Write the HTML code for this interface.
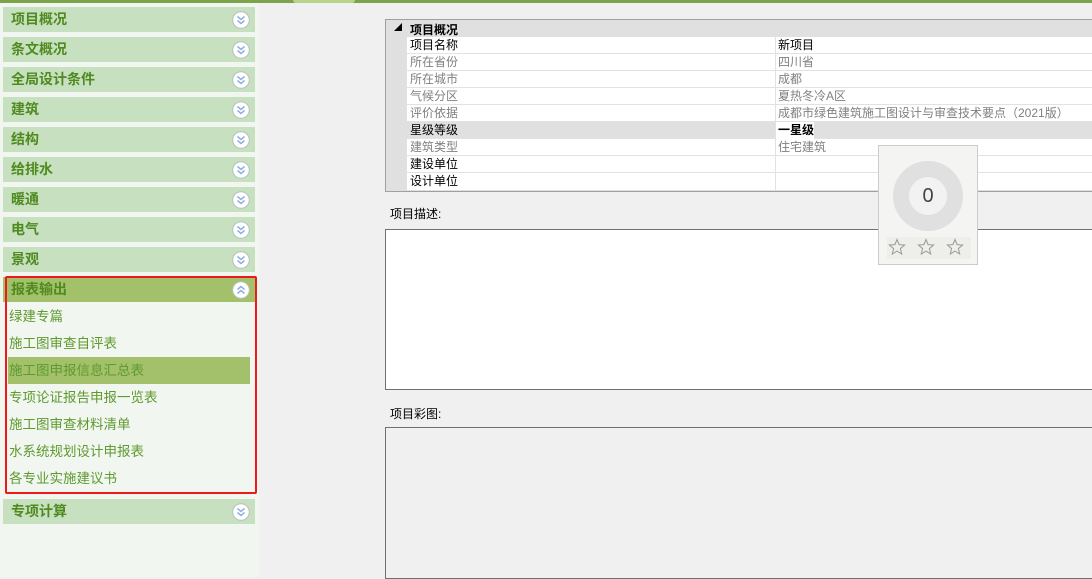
<!DOCTYPE html>
<html><head><meta charset="utf-8"><style>
*{margin:0;padding:0;box-sizing:border-box}
body{width:1092px;height:577px;overflow:hidden;background:#f0f0f0;font-family:"Liberation Sans","Noto Sans CJK SC",sans-serif;position:relative}
.top{position:absolute;left:0;top:0;width:1092px;height:3px;background:#7aa34a}
.tab{position:absolute;left:293px;top:0;width:62px;height:3px;background:#b8d48a;border-radius:0 0 4px 4px}
.side{position:absolute;left:0;top:3px;width:259px;height:574px;background:#f1f6f0}
.h{position:absolute;left:3px;width:252px;height:25px;background:#c6e0c0;color:#4f8a1e;font-weight:bold;font-size:14px;line-height:25px;padding-left:8px}
.h svg{position:absolute;right:5px;top:4px}
.it{position:absolute;left:9px;font-size:13.5px;color:#5f9a30;line-height:20px}
.red{position:absolute;left:5px;top:276px;width:252px;height:218px;border:2px solid #f01818;border-radius:2px}
.grid{position:absolute;left:385px;top:19px;width:710px;height:173px;border:1px solid #a0a0a0;background:#e0e0e0;font-size:12px}
.r{position:absolute;left:21px;width:690px;height:17px;border-bottom:1px solid #e2e2e2;background:#fff;line-height:16px}
.r span{position:absolute;left:3px}
.r b,.r em{position:absolute;left:368px;font-style:normal;padding-left:2px;border-left:1px solid #e2e2e2;height:17px;top:0}
.g{color:#808080}
.box{position:absolute;left:385px;border:1px solid #707070}
.lbl{position:absolute;left:390px;font-size:12px;color:#000}
</style></head><body>
<svg width="0" height="0" style="position:absolute"><defs>
<g id="dn"><circle cx="9" cy="9" r="8.3" fill="#fff" stroke="#b8c0c0"/><path d="M5.5 5.5L9 8.5L12.5 5.5M5.5 9.5L9 12.5L12.5 9.5" fill="none" stroke="#8fb0e0" stroke-width="1.5"/></g>
<g id="up"><circle cx="9" cy="9" r="8.3" fill="#fff" stroke="#b8c0c0"/><path d="M5.5 8.5L9 5.5L12.5 8.5M5.5 12.5L9 9.5L12.5 12.5" fill="none" stroke="#8fb0e0" stroke-width="1.5"/></g>
<path id="st" d="M9 1.5L11.1 6.6L16.6 7L12.4 10.6L13.7 16L9 13.1L4.3 16L5.6 10.6L1.4 7L6.9 6.6Z" fill="none" stroke="#999" stroke-width="1"/>
</defs></svg>
<div class="top"></div><div class="tab"></div>
<div class="side">
<div class="h" style="top:4px">项目概况<svg width="18" height="18"><use href="#dn"/></svg></div>
<div class="h" style="top:34px">条文概况<svg width="18" height="18"><use href="#dn"/></svg></div>
<div class="h" style="top:64px">全局设计条件<svg width="18" height="18"><use href="#dn"/></svg></div>
<div class="h" style="top:94px">建筑<svg width="18" height="18"><use href="#dn"/></svg></div>
<div class="h" style="top:124px">结构<svg width="18" height="18"><use href="#dn"/></svg></div>
<div class="h" style="top:154px">给排水<svg width="18" height="18"><use href="#dn"/></svg></div>
<div class="h" style="top:184px">暖通<svg width="18" height="18"><use href="#dn"/></svg></div>
<div class="h" style="top:214px">电气<svg width="18" height="18"><use href="#dn"/></svg></div>
<div class="h" style="top:244px">景观<svg width="18" height="18"><use href="#dn"/></svg></div>
<div class="h" style="top:274px;background:#a3c06a">报表输出<svg width="18" height="18"><use href="#up"/></svg></div>
<div style="position:absolute;left:8px;top:354px;width:242px;height:27px;background:#a3c06a"></div>
<div class="it" style="top:304px">绿建专篇</div>
<div class="it" style="top:331px">施工图审查自评表</div>
<div class="it" style="top:358px">施工图申报信息汇总表</div>
<div class="it" style="top:385px">专项论证报告申报一览表</div>
<div class="it" style="top:412px">施工图审查材料清单</div>
<div class="it" style="top:439px">水系统规划设计申报表</div>
<div class="it" style="top:466px">各专业实施建议书</div>
<div class="h" style="top:496px">专项计算<svg width="18" height="18"><use href="#dn"/></svg></div>
</div>
<div class="red"></div>
<div class="grid">
<div style="position:absolute;left:8px;top:2px;font-size:8px">◢</div>
<div style="position:absolute;left:24px;top:1px;font-weight:bold">项目概况</div>
<div class="r" style="top:17px"><span>项目名称</span><b style="font-weight:normal">新项目</b></div>
<div class="r g" style="top:34px"><span>所在省份</span><em>四川省</em></div>
<div class="r g" style="top:51px"><span>所在城市</span><em>成都</em></div>
<div class="r g" style="top:68px"><span>气候分区</span><em>夏热冬冷A区</em></div>
<div class="r g" style="top:85px"><span>评价依据</span><em>成都市绿色建筑施工图设计与审查技术要点（2021版）</em></div>
<div class="r" style="top:102px;background:#e0e0e0"><span>星级等级</span><b style="background:#fff">一星级</b></div>
<div class="r g" style="top:119px"><span>建筑类型</span><em>住宅建筑</em></div>
<div class="r" style="top:136px"><span>建设单位</span><em></em></div>
<div class="r" style="top:153px;border-bottom:0"><span>设计单位</span><em></em></div>
</div>
<div class="lbl" style="top:205px">项目描述:</div>
<div class="box" style="top:229px;width:710px;height:161px;background:#fff"></div>
<div class="lbl" style="top:405px">项目彩图:</div>
<div class="box" style="top:427px;width:710px;height:152px;background:#f0f0f0"></div>
<div style="position:absolute;left:878px;top:145px;width:100px;height:120px;background:#f4f4f2;border:1px solid #ccc">
<div style="position:absolute;left:14px;top:15px;width:70px;height:70px;border-radius:50%;background:#e0e0e0"></div>
<div style="position:absolute;left:30px;top:31px;width:38px;height:38px;border-radius:50%;background:#f2f2f2;text-align:center;line-height:38px;font-size:20px;color:#444">0</div>
<div style="position:absolute;left:8px;top:91px;width:84px;height:22px;background:#eeeeea"></div>
<svg style="position:absolute;left:9px;top:92px" width="90" height="20"><use href="#st"/><use href="#st" x="29"/><use href="#st" x="58"/></svg>
</div>
</body></html>
